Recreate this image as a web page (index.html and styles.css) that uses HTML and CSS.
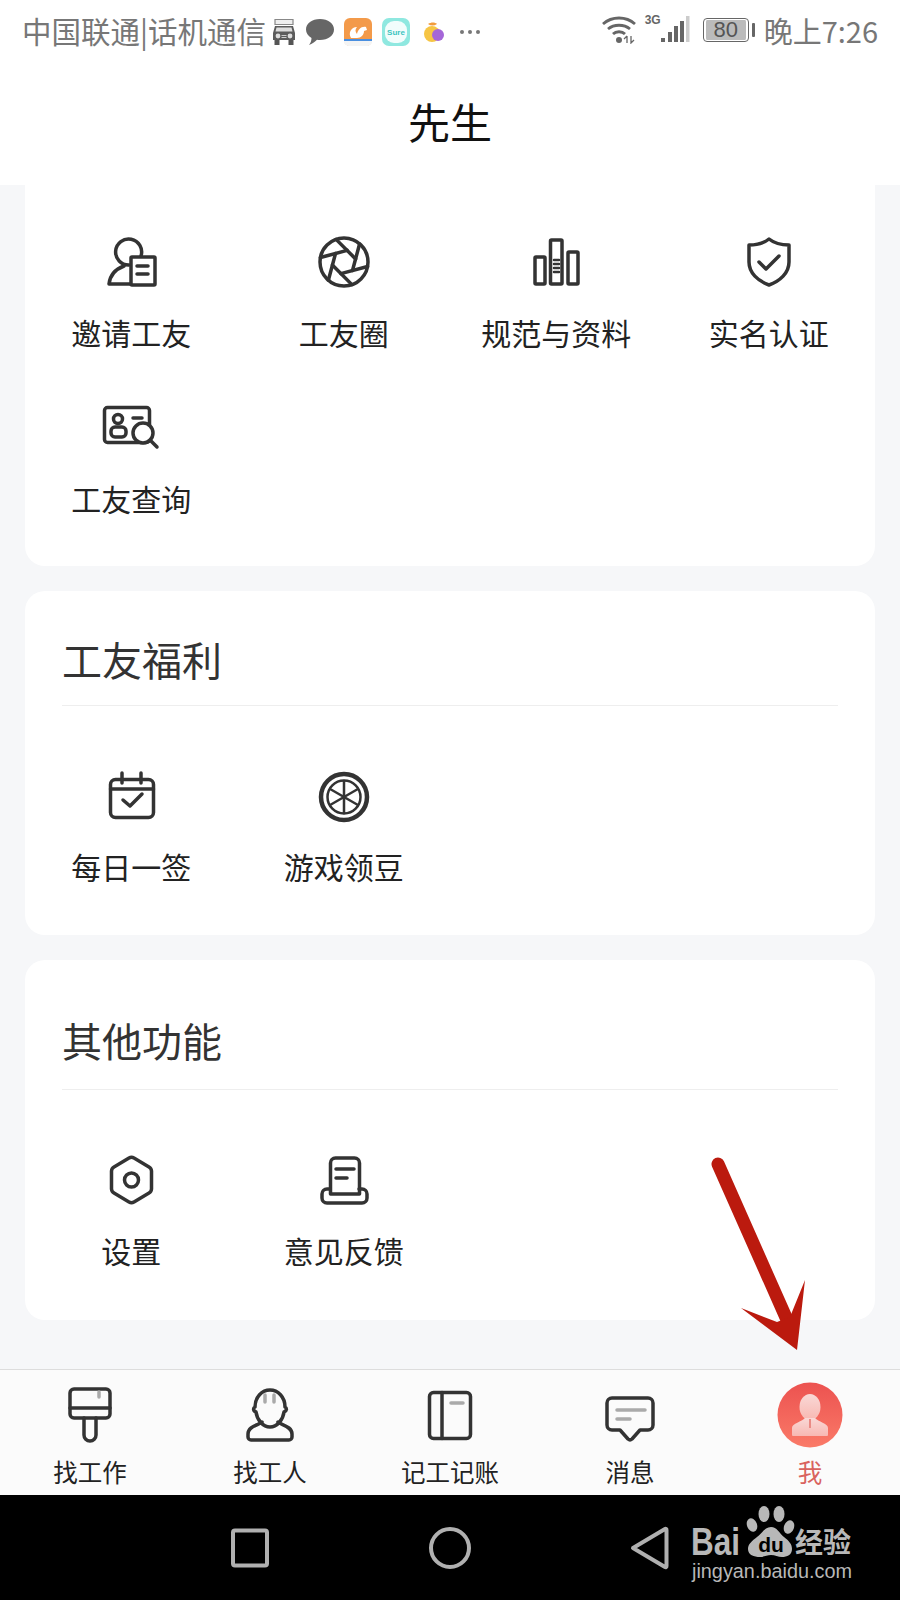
FILE: index.html
```html
<!DOCTYPE html>
<html lang="zh-CN">
<head>
  <meta charset="UTF-8" />
  <meta name="viewport" content="width=device-width, initial-scale=1.0"/>
  <title>先生</title>
  <link rel="stylesheet" href="styles.css">
</head>
<body>
  <div class="screen">
    <header class="top">
      <div class="status">
        <span class="carrier">中国联通|话机通信</span>
        <div class="notify">
          <!-- 货车 -->
          <svg width="24" height="28" viewBox="0 0 24 28">
            <path d="M3 1.500h18v5H3z" fill="#eee" stroke="#888" stroke-width="1.200"/>
            <path d="M3 8h18l2 7v7H1v-7z" fill="#5c5c5c"/>
            <path d="M4.500 9.500h15l1 4h-17z" fill="#ddd"/>
            <circle cx="6" cy="18" r="2.400" fill="#ddd"/>
            <circle cx="18" cy="18" r="2.400" fill="#ddd"/>
            <path d="M9.500 17h5v1h-5zM9.500 19h5v1h-5z" fill="#ccc"/>
            <path d="M2.500 22h5v5h-5zM16.500 22h5v5h-5z" fill="#555"/>
          </svg>
          <svg width="28" height="28" viewBox="0 0 28 28">
            <path d="M14 1c8 0 14 4.500 14 10.500S22 22 14 22c-1 0-2 0-3-.2C9 24 6 26 3 27c1.500-2 2.500-4 2.500-7C2 18 0 15 0 11.500 0 5.500 6 1 14 1z" fill="#666"/>
          </svg>
          <svg width="28" height="28" viewBox="0 0 28 28">
            <rect width="28" height="28" rx="6" fill="#f39a4a"/>
            <path d="M7 20c-3-5 0-11 6-11-2 2-2 5 0 7 1-4 4-8 9-7l1 3-3 1c0 4-3 7-7 7z" fill="#fff"/>
            <path d="M0 21h28v2H0z" fill="#4a8fe0"/>
            <path d="M0 23h28v1c0 2-2 4-6 4H6c-4 0-6-2-6-4z" fill="#f4f4f4"/>
          </svg>
          <svg width="28" height="28" viewBox="0 0 28 28">
            <rect width="28" height="28" rx="7" fill="#8fe8e0"/>
            <rect x="3" y="3" width="22" height="22" rx="9" fill="#f2fdfc"/>
            <text x="14" y="17" text-anchor="middle" class="su-text">Sure</text>
          </svg>
          <svg width="24" height="28" viewBox="0 0 24 28">
            <circle cx="12" cy="16" r="8" fill="#f6c544"/>
            <circle cx="18" cy="17" r="6" fill="#a566d8"/>
            <path d="M8 6c3-2 7-2 9 0-3 2-6 2-9 0z" fill="#f29b3c"/>
          </svg>
          <svg class="dots" width="26" height="28" viewBox="0 0 26 28">
            <circle cx="8" cy="14" r="2" fill="#777"/>
            <circle cx="16" cy="14" r="2" fill="#777"/>
            <circle cx="24" cy="14" r="2" fill="#777"/>
          </svg>
        </div>
        <div class="system">
          <svg width="34" height="28" viewBox="0 0 34 28">
            <g fill="none" stroke="#666" stroke-width="2.800">
              <path d="M1 8c9-8 23-8 32 0"/>
              <path d="M6 13c6-5 16-5 22 0"/>
              <path d="M11 18c3-3 9-3 12 0"/>
            </g>
            <circle cx="17" cy="24" r="3" fill="#666"/>
            <path d="M25 20v7M22 23l3-3M29 20v7l3-3" fill="none" stroke="#666" stroke-width="1.300"/>
          </svg>
          <div class="signal">
            <span class="net">3G</span>
            <svg width="30" height="28" viewBox="0 0 30 28">
              <rect x="1" y="22" width="4" height="4" fill="#666"/>
              <rect x="8" y="16" width="4" height="10" fill="#666"/>
              <rect x="14" y="10" width="4" height="16" fill="#666"/>
              <rect x="20" y="5" width="4" height="21" fill="#666"/>
              <rect x="26" y="0" width="3.500" height="26" fill="#ccc"/>
            </svg>
          </div>
          <div class="battery">
            <span class="battery-body">80</span>
            <span class="battery-tip"></span>
          </div>
          <span class="clock">晚上7:26</span>
        </div>
      </div>
      <h1 class="title">先生</h1>
    </header>

    <main class="page">
      <section class="card card-first">
        <div class="grid grid-tall">
          <div class="item">
            <svg class="icon" viewBox="0 0 60 60">
              <path d="M40 24A13 13 0 1 0 28 33"/>
              <path d="M29 52H8c1-9 7-15 15-18"/>
              <rect x="30" y="25" width="24" height="28" rx="1"/>
              <path d="M36 34h11M36 42h11"/>
            </svg>
            <span>邀请工友</span>
          </div>
          <div class="item">
            <svg class="icon" viewBox="0 0 60 60">
              <circle cx="30" cy="30" r="24"/>
              <g transform="rotate(-45 30 30)">
                <path d="M40.400 8.400V36"/>
                <path d="M40.400 8.400V36" transform="rotate(60 30 30)"/>
                <path d="M40.400 8.400V36" transform="rotate(120 30 30)"/>
                <path d="M40.400 8.400V36" transform="rotate(180 30 30)"/>
                <path d="M40.400 8.400V36" transform="rotate(240 30 30)"/>
                <path d="M40.400 8.400V36" transform="rotate(300 30 30)"/>
              </g>
            </svg>
            <span>工友圈</span>
          </div>
          <div class="item">
            <svg class="icon" viewBox="0 0 60 60">
              <rect x="9" y="25" width="10" height="27" rx="1"/>
              <rect x="24.500" y="8" width="11.500" height="44" rx="1"/>
              <rect x="42" y="20" width="10" height="32" rx="1"/>
              <path class="thin" d="M28 28h5M28 32h5M28 36h5M28 40h5"/>
            </svg>
            <span>规范与资料</span>
          </div>
          <div class="item">
            <svg class="icon" viewBox="0 0 60 60">
              <path d="M30 7c5 4 12 6 20 6v17c0 11-9 19-20 23-11-4-20-12-20-23V13c8 0 15-2 20-6z"/>
              <path d="M20 30l7 7 13-13"/>
            </svg>
            <span>实名认证</span>
          </div>
          <div class="item">
            <svg class="icon" viewBox="0 0 60 60">
              <rect x="3.500" y="9.500" width="45" height="35" rx="3"/>
              <circle cx="17" cy="21" r="4.500"/>
              <rect x="10" y="29" width="15" height="10" rx="4"/>
              <path d="M32 20h9"/>
              <circle class="mask" cx="42" cy="35" r="10"/>
              <path d="M49 42l7 7"/>
            </svg>
            <span>工友查询</span>
          </div>
        </div>
      </section>

      <section class="card">
        <h2 class="card-head">工友福利</h2>
        <div class="grid">
          <div class="item">
            <svg class="icon" viewBox="0 0 60 60">
              <rect x="9.500" y="13.500" width="43" height="38" rx="5"/>
              <path d="M9.500 23h43M21 7v10M40 7v10"/>
              <path d="M22 34l7 6 12-12"/>
            </svg>
            <span>每日一签</span>
          </div>
          <div class="item">
            <svg class="icon" viewBox="0 0 60 60">
              <circle class="thick" cx="30" cy="31" r="23"/>
              <circle class="thin" cx="30" cy="31" r="16.500"/>
              <path class="thin" d="M30 15v32M16.100 23l27.800 16M16.100 39l27.800-16"/>
            </svg>
            <span>游戏领豆</span>
          </div>
        </div>
      </section>

      <section class="card card-last">
        <h2 class="card-head card-head-tall">其他功能</h2>
        <div class="grid">
          <div class="item">
            <svg class="icon" viewBox="0 0 60 60">
              <path d="M28 8a5 5 0 0 1 5 0l15 9a5 5 0 0 1 2.500 4v18a5 5 0 0 1-2.500 4l-15 9a5 5 0 0 1-5 0l-15-9a5 5 0 0 1-2.500-4V21a5 5 0 0 1 2.500-4z"/>
              <circle cx="30.500" cy="30" r="7"/>
            </svg>
            <span>设置</span>
          </div>
          <div class="item">
            <svg class="icon" viewBox="0 0 60 60">
              <path d="M16.500 44V13a5 5 0 0 1 5-5h19a5 5 0 0 1 5 5v31z"/>
              <path d="M16 39h-3a5 5 0 0 0-5 5v4a5 5 0 0 0 5 5h35a5 5 0 0 0 5-5v-4a5 5 0 0 0-5-5h-3"/>
              <path d="M22 19h18M22 28h11"/>
            </svg>
            <span>意见反馈</span>
          </div>
        </div>
      </section>
    </main>

    <nav class="tabs">
      <div class="tab">
        <svg class="tab-icon" viewBox="0 0 60 60">
          <path d="M14 4h32a4 4 0 0 1 4 4v21a4 4 0 0 1-4 4H14a4 4 0 0 1-4-4V8a4 4 0 0 1 4-4z"/>
          <path d="M10 23h40"/>
          <path d="M24 33v17a6 6 0 0 0 12 0V33"/>
          <path class="grey" d="M39 7v5"/>
        </svg>
        <span>找工作</span>
      </div>
      <div class="tab">
        <svg class="tab-icon" viewBox="0 0 60 60">
          <path d="M16 27c-3-1-3-4-1-5 0-10 7-17 15-17s15 7 15 17c2 1 2 4-1 5-1 8-7 15-14 15s-13-7-14-15z"/>
          <path d="M22 37c-3 3-14 4-14 12v3a3 3 0 0 0 3 3h38a3 3 0 0 0 3-3v-3c0-8-11-9-14-12"/>
          <path class="grey" d="M25 10v7M34 10v7"/>
        </svg>
        <span>找工人</span>
      </div>
      <div class="tab">
        <svg class="tab-icon" viewBox="0 0 60 60">
          <rect x="9.500" y="7.500" width="41" height="46" rx="4"/>
          <path d="M22 7.500v46"/>
          <path class="grey" d="M31 18h12"/>
        </svg>
        <span>记工记账</span>
      </div>
      <div class="tab">
        <svg class="tab-icon" viewBox="0 0 60 60">
          <path d="M12 13h36a5 5 0 0 1 5 5v22a5 5 0 0 1-5 5h-8l-8 9a3 3 0 0 1-4 0l-8-9h-8a5 5 0 0 1-5-5V18a5 5 0 0 1 5-5z"/>
          <path class="grey" d="M17 25h28M17 34h13"/>
        </svg>
        <span>消息</span>
      </div>
      <div class="tab tab-active">
        <svg class="tab-avatar" viewBox="0 0 66 66">
          <defs>
            <linearGradient id="avatarBg" x1="0" y1="0" x2="0" y2="1">
              <stop offset="0" stop-color="#ec5250"/>
              <stop offset="1" stop-color="#fa7a68"/>
            </linearGradient>
            <linearGradient id="avatarMan" x1="0" y1="0" x2="0" y2="1">
              <stop offset="0" stop-color="#f9d8d6"/>
              <stop offset="1" stop-color="#f8b8b2"/>
            </linearGradient>
          </defs>
          <circle cx="33" cy="33" r="32.500" fill="url(#avatarBg)"/>
          <ellipse cx="33" cy="25" rx="10.500" ry="13" fill="url(#avatarMan)"/>
          <path d="M15 53v-7c0-5 10-6 13-10h10c3 4 13 5 13 10v7a1 1 0 0 1-1 1H16a1 1 0 0 1-1-1z" fill="url(#avatarMan)"/>
          <rect x="32" y="37" width="2" height="9" fill="#ea8a84"/>
        </svg>
        <span>我</span>
      </div>
    </nav>

    <div class="softkeys">
      <div class="softkey">
        <svg width="40" height="40" viewBox="0 0 40 40"><rect x="3" y="2.500" width="34" height="35" rx="2"/></svg>
      </div>
      <div class="softkey">
        <svg width="44" height="44" viewBox="0 0 44 44"><circle cx="22" cy="22" r="19"/></svg>
      </div>
      <div class="softkey">
        <svg width="44" height="44" viewBox="0 0 44 44"><path d="M5 22L37 3a1 1 0 0 1 1.500 1v36a1 1 0 0 1-1.500 1z"/></svg>
      </div>
    </div>

    <!-- 标注箭头 -->
    <svg class="arrow" width="110" height="210" viewBox="0 0 110 210">
      <path d="M8 14L78 172" stroke="#bb1a0e" stroke-width="13" stroke-linecap="round" fill="none"/>
      <path d="M87 200L31 158 67 172 80 167 95 130z" fill="#bb1a0e"/>
    </svg>

    <!-- 百度经验水印 -->
    <svg class="watermark" width="170" height="82" viewBox="0 0 170 82">
      <text x="2" y="52" class="wm-bai" textLength="49" lengthAdjust="spacingAndGlyphs">Bai</text>
      <ellipse cx="63" cy="22" rx="5" ry="7" fill="#b8b8b8" transform="rotate(-20 63 22)"/>
      <ellipse cx="75" cy="11" rx="5.500" ry="8" fill="#b8b8b8"/>
      <ellipse cx="90" cy="11" rx="5.500" ry="8" fill="#b8b8b8"/>
      <ellipse cx="100" cy="24" rx="5" ry="7" fill="#b8b8b8" transform="rotate(20 100 24)"/>
      <path d="M82 24c6 0 8 6 13 10 5 4 8 7 8 12 0 6-5 8-10 8-4 0-7-2-11-2s-7 2-11 2c-6 0-12-2-12-8 0-5 4-8 9-12 5-4 8-10 14-10z" fill="#b8b8b8"/>
      <text x="82" y="49" text-anchor="middle" class="wm-du">du</text>
      <text x="106" y="50" class="wm-cn">经验</text>
      <text x="3" y="75" class="wm-url" textLength="160" lengthAdjust="spacingAndGlyphs">jingyan.baidu.com</text>
    </svg>
  </div>
</body>
</html>
```

FILE: styles.css
```css
* {
  box-sizing: border-box;
}

body {
  margin: 0;
  font-family: "Noto Sans CJK SC", "Noto Sans", sans-serif;
  background-color: #000;
}

.screen {
  position: relative;
  width: 900px;
  height: 1600px;
  display: flex;
  flex-direction: column;
  overflow: hidden;
}

/* 顶部 */
.top {
  height: 185px;
  background-color: #fff;
}

.status {
  display: flex;
  align-items: center;
  height: 60px;
  padding: 0 22px;
  color: #777;
}

.carrier {
  font-size: 29.5px;
  line-height: 40px;
  white-space: nowrap;
}

.notify {
  display: flex;
  align-items: center;
  gap: 10px;
  margin: 3px 0 0 6px;
}

.su-text {
  font-family: "Liberation Sans", sans-serif;
  font-size: 8px;
  font-weight: bold;
  fill: #3cc4c0;
}

.system {
  display: flex;
  align-items: center;
  margin-left: auto;
}

.signal {
  position: relative;
  display: flex;
  margin-left: 9px;
  padding-left: 15px;
}

.net {
  position: absolute;
  left: 0;
  top: -3px;
  font-family: "Liberation Sans", sans-serif;
  font-size: 12px;
  font-weight: bold;
  color: #666;
}

.battery {
  display: flex;
  align-items: center;
  gap: 3px;
  margin-left: 13px;
}

.battery-body {
  width: 46px;
  height: 24px;
  border: 1.5px solid #666;
  border-radius: 4px;
  background-color: #bbb;
  background-clip: content-box;
  padding: 1px 2px;
  font-family: "Liberation Sans", sans-serif;
  font-size: 22px;
  line-height: 19px;
  text-align: center;
  color: #555;
}

.battery-tip {
  width: 3px;
  height: 14px;
  border-radius: 1px;
  background-color: #666;
}

.clock {
  margin-left: 9px;
  font-size: 29px;
  line-height: 40px;
}

.title {
  margin: 0;
  height: 125px;
  font-size: 42px;
  font-weight: 400;
  line-height: 122px;
  text-align: center;
  color: #111;
}

/* 内容 */
.page {
  height: 1184px;
  padding: 0 25px;
  background-color: #f6f7f9;
}

.card {
  margin-top: 25px;
  padding-bottom: 47px;
  border-radius: 20px;
  background-color: #fff;
}

.card-first {
  margin-top: 0;
  padding-top: 47px;
  padding-bottom: 46px;
  border-radius: 0 0 20px 20px;
}

.card-last {
  padding-bottom: 48px;
}

.card-head {
  margin: 0 37px 60px;
  padding: 40px 0 18px;
  border-bottom: 1px solid #eee;
  font-size: 40px;
  font-weight: 400;
  line-height: 56px;
  color: #333;
}

.card-head-tall {
  padding: 52px 0 21px;
}

.grid {
  display: grid;
  grid-template-columns: repeat(4, 1fr);
}

.grid-tall {
  row-gap: 44px;
}

.item {
  display: flex;
  flex-direction: column;
  align-items: center;
  font-size: 30px;
  line-height: 40px;
  color: #222;
  white-space: nowrap;
}

.item span {
  margin: 20px 0 2px;
}

.icon {
  width: 60px;
  height: 60px;
  fill: none;
  stroke: #333;
  stroke-width: 3.5;
  stroke-linejoin: round;
  stroke-linecap: round;
}

.icon .thin {
  stroke-width: 2.5;
}

.icon .thick {
  stroke-width: 4.5;
}

.icon .mask {
  fill: #fff;
}

/* 底部导航 */
.tabs {
  display: grid;
  grid-template-columns: repeat(5, 1fr);
  height: 126px;
  padding-top: 12px;
  border-top: 1px solid #ddd;
  background-color: #fbfbfb;
}

.tab {
  display: flex;
  flex-direction: column;
  align-items: center;
  font-size: 24.5px;
  line-height: 34px;
  color: #222;
}

.tab span {
  margin-top: 7px;
}

.tab-icon {
  width: 60px;
  height: 60px;
  margin: 3px 0;
  fill: none;
  stroke: #333;
  stroke-width: 3.5;
  stroke-linejoin: round;
  stroke-linecap: round;
}

.tab-icon .grey {
  stroke: #aaa;
}

.tab-avatar {
  width: 66px;
  height: 66px;
}

.tab-active {
  color: #d9635f;
}

/* 系统按键 */
.softkeys {
  display: flex;
  justify-content: center;
  align-items: center;
  height: 105px;
  background-color: #000;
}

.softkey {
  display: flex;
  justify-content: center;
  width: 200px;
}

.softkey svg {
  fill: none;
  stroke: #b0b0b0;
  stroke-width: 4;
  stroke-linejoin: round;
}

/* 叠加层 */
.arrow {
  position: absolute;
  left: 710px;
  top: 1150px;
}

.watermark {
  position: absolute;
  left: 689px;
  top: 1503px;
}

.wm-bai {
  font-family: "Liberation Sans", sans-serif;
  font-size: 38px;
  font-weight: bold;
  fill: #b8b8b8;
}

.wm-du {
  font-family: "Liberation Sans", sans-serif;
  font-size: 21px;
  font-weight: bold;
  fill: #000;
}

.wm-cn {
  font-size: 28px;
  font-weight: 700;
  fill: #b8b8b8;
}

.wm-url {
  font-family: "Liberation Sans", sans-serif;
  font-size: 20.5px;
  fill: #b8b8b8;
}
```
